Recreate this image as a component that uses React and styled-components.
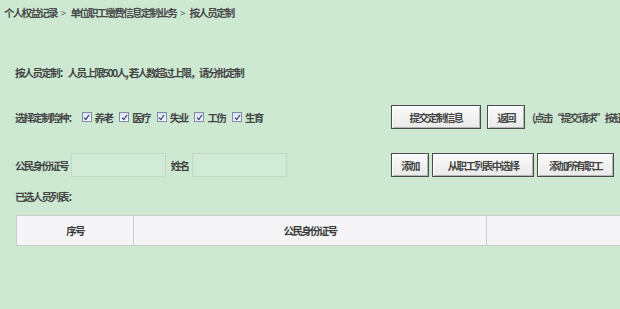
import React from "react";
import styled, { createGlobalStyle } from "styled-components";

const GlobalStyle = createGlobalStyle`
  html, body {
    margin: 0;
    padding: 0;
    overflow: hidden;
    background: #cde9d2;
  }
  body {
    font-family: "Noto Sans CJK SC", "Noto Sans", sans-serif;
    color: #444;
  }
`;

const Page = styled.div`
  width: 620px;
  height: 309px;
  background: #cde9d2;
  font-size: 10.5px;
  letter-spacing: -1.7px;
  font-weight: 700;
`;

const Breadcrumb = styled.div`
  display: flex;
  align-items: center;
  gap: 4px;
  height: 26px;
  padding: 0 0 2px 4px;
  box-sizing: border-box;
  color: #4a4a4a;
`;

const Sep = styled.span`
  color: #666;
  font-size: 10px;
  font-weight: 400;
  letter-spacing: 0;
`;

const Body = styled.div`
  padding: 0 0 0 15px;
`;

const Notice = styled.div`
  margin-top: 39px;
  line-height: 16px;
`;

const Comma = styled.span`
  letter-spacing: 0;
`;

const FormRow = styled.div`
  display: grid;
  grid-template-columns: 376px auto;
  align-items: center;
  height: 24px;
  margin-top: ${(p) => p.$top}px;
`;

const Group = styled.div`
  display: flex;
  align-items: center;
  gap: ${(p) => p.$gap || 0}px;
  white-space: nowrap;
`;

const Label = styled.span`
  margin-right: ${(p) => p.$mr || 0}px;
`;

const Check = styled.label`
  display: flex;
  align-items: center;
  gap: 3px;
  margin-right: 7px;
`;

const Box = styled.span`
  display: inline-flex;
  align-items: center;
  justify-content: center;
  width: 8px;
  height: 8px;
  border: 1px solid #7d8cae;
  background: linear-gradient(#dde3f0, #fbfbfd);
`;

const Input = styled.div`
  width: ${(p) => p.$w}px;
  height: 24px;
  box-sizing: border-box;
  border: 1px solid #c5d7c8;
  background: #d2ebd6;
  margin-right: ${(p) => p.$mr || 0}px;
`;

const Button = styled.button`
  width: ${(p) => p.$w}px;
  height: 24px;
  box-sizing: border-box;
  border: 1px solid #4b4b4b;
  background: linear-gradient(#fbfbfb, #e9e9e9);
  box-shadow: inset 1px 1px 0 #ffffff, inset -1px -1px 0 #b4b4b4;
  font-family: inherit;
  font-size: 10.5px;
  font-weight: 700;
  letter-spacing: -1.7px;
  color: #444;
  padding: 0;
  cursor: pointer;
`;

const Hint = styled.span`
  margin-left: 1px;
  color: #4a4a4a;
`;

const ListTitle = styled.div`
  margin-top: 12px;
  line-height: 16px;
`;

const Table = styled.table`
  margin-top: 10px;
  margin-left: 1px;
  width: 640px;
  border-collapse: collapse;
  table-layout: fixed;
`;

const Th = styled.th`
  width: ${(p) => (p.$w ? `${p.$w}px` : "auto")};
  height: 29px;
  background: #f5f5f7;
  border: 1px solid #c7cfc8;
  font-weight: 700;
  font-size: 10.5px;
  color: #3a3a3a;
  text-align: center;
  padding: 0;
`;

const insurances = ["养老", "医疗", "失业", "工伤", "生育"];

function CheckMark() {
  return (
    <svg width="7" height="7" viewBox="0 0 7 7">
      <path d="M1 3.6 L2.8 5.6 L6 1" fill="none" stroke="#2b3a78" strokeWidth="1.2" />
    </svg>
  );
}

export default function App() {
  return (
    <Page>
      <GlobalStyle />
      <Breadcrumb>
        <span>个人权益记录</span>
        <Sep>&gt;</Sep>
        <span>单位职工缴费信息定制业务</span>
        <Sep>&gt;</Sep>
        <span>按人员定制</span>
      </Breadcrumb>
      <Body>
        <Notice>
          按人员定制：人员上限500人<Comma>,</Comma>若人数超过上限，请分批定制
        </Notice>
        <FormRow $top={24}>
          <Group>
            <Label $mr={5}>选择定制险种：</Label>
            {insurances.map((name) => (
              <Check key={name}>
                <Box>
                  <CheckMark />
                </Box>
                {name}
              </Check>
            ))}
          </Group>
          <Group $gap={6}>
            <Button $w={90}>提交定制信息</Button>
            <Button $w={38}>返回</Button>
            <Hint>(点击“提交请求”按钮</Hint>
          </Group>
        </FormRow>
        <FormRow $top={24}>
          <Group>
            <Label $mr={3}>公民身份证号</Label>
            <Input $w={95} $mr={5} />
            <Label $mr={4}>姓名</Label>
            <Input $w={95} />
          </Group>
          <Group $gap={3}>
            <Button $w={38}>添加</Button>
            <Button $w={102}>从职工列表中选择</Button>
            <Button $w={77}>添加所有职工</Button>
          </Group>
        </FormRow>
        <ListTitle>已选人员列表：</ListTitle>
        <Table>
          <thead>
            <tr>
              <Th $w={116}>序号</Th>
              <Th $w={352}>公民身份证号</Th>
              <Th />
            </tr>
          </thead>
        </Table>
      </Body>
    </Page>
  );
}
